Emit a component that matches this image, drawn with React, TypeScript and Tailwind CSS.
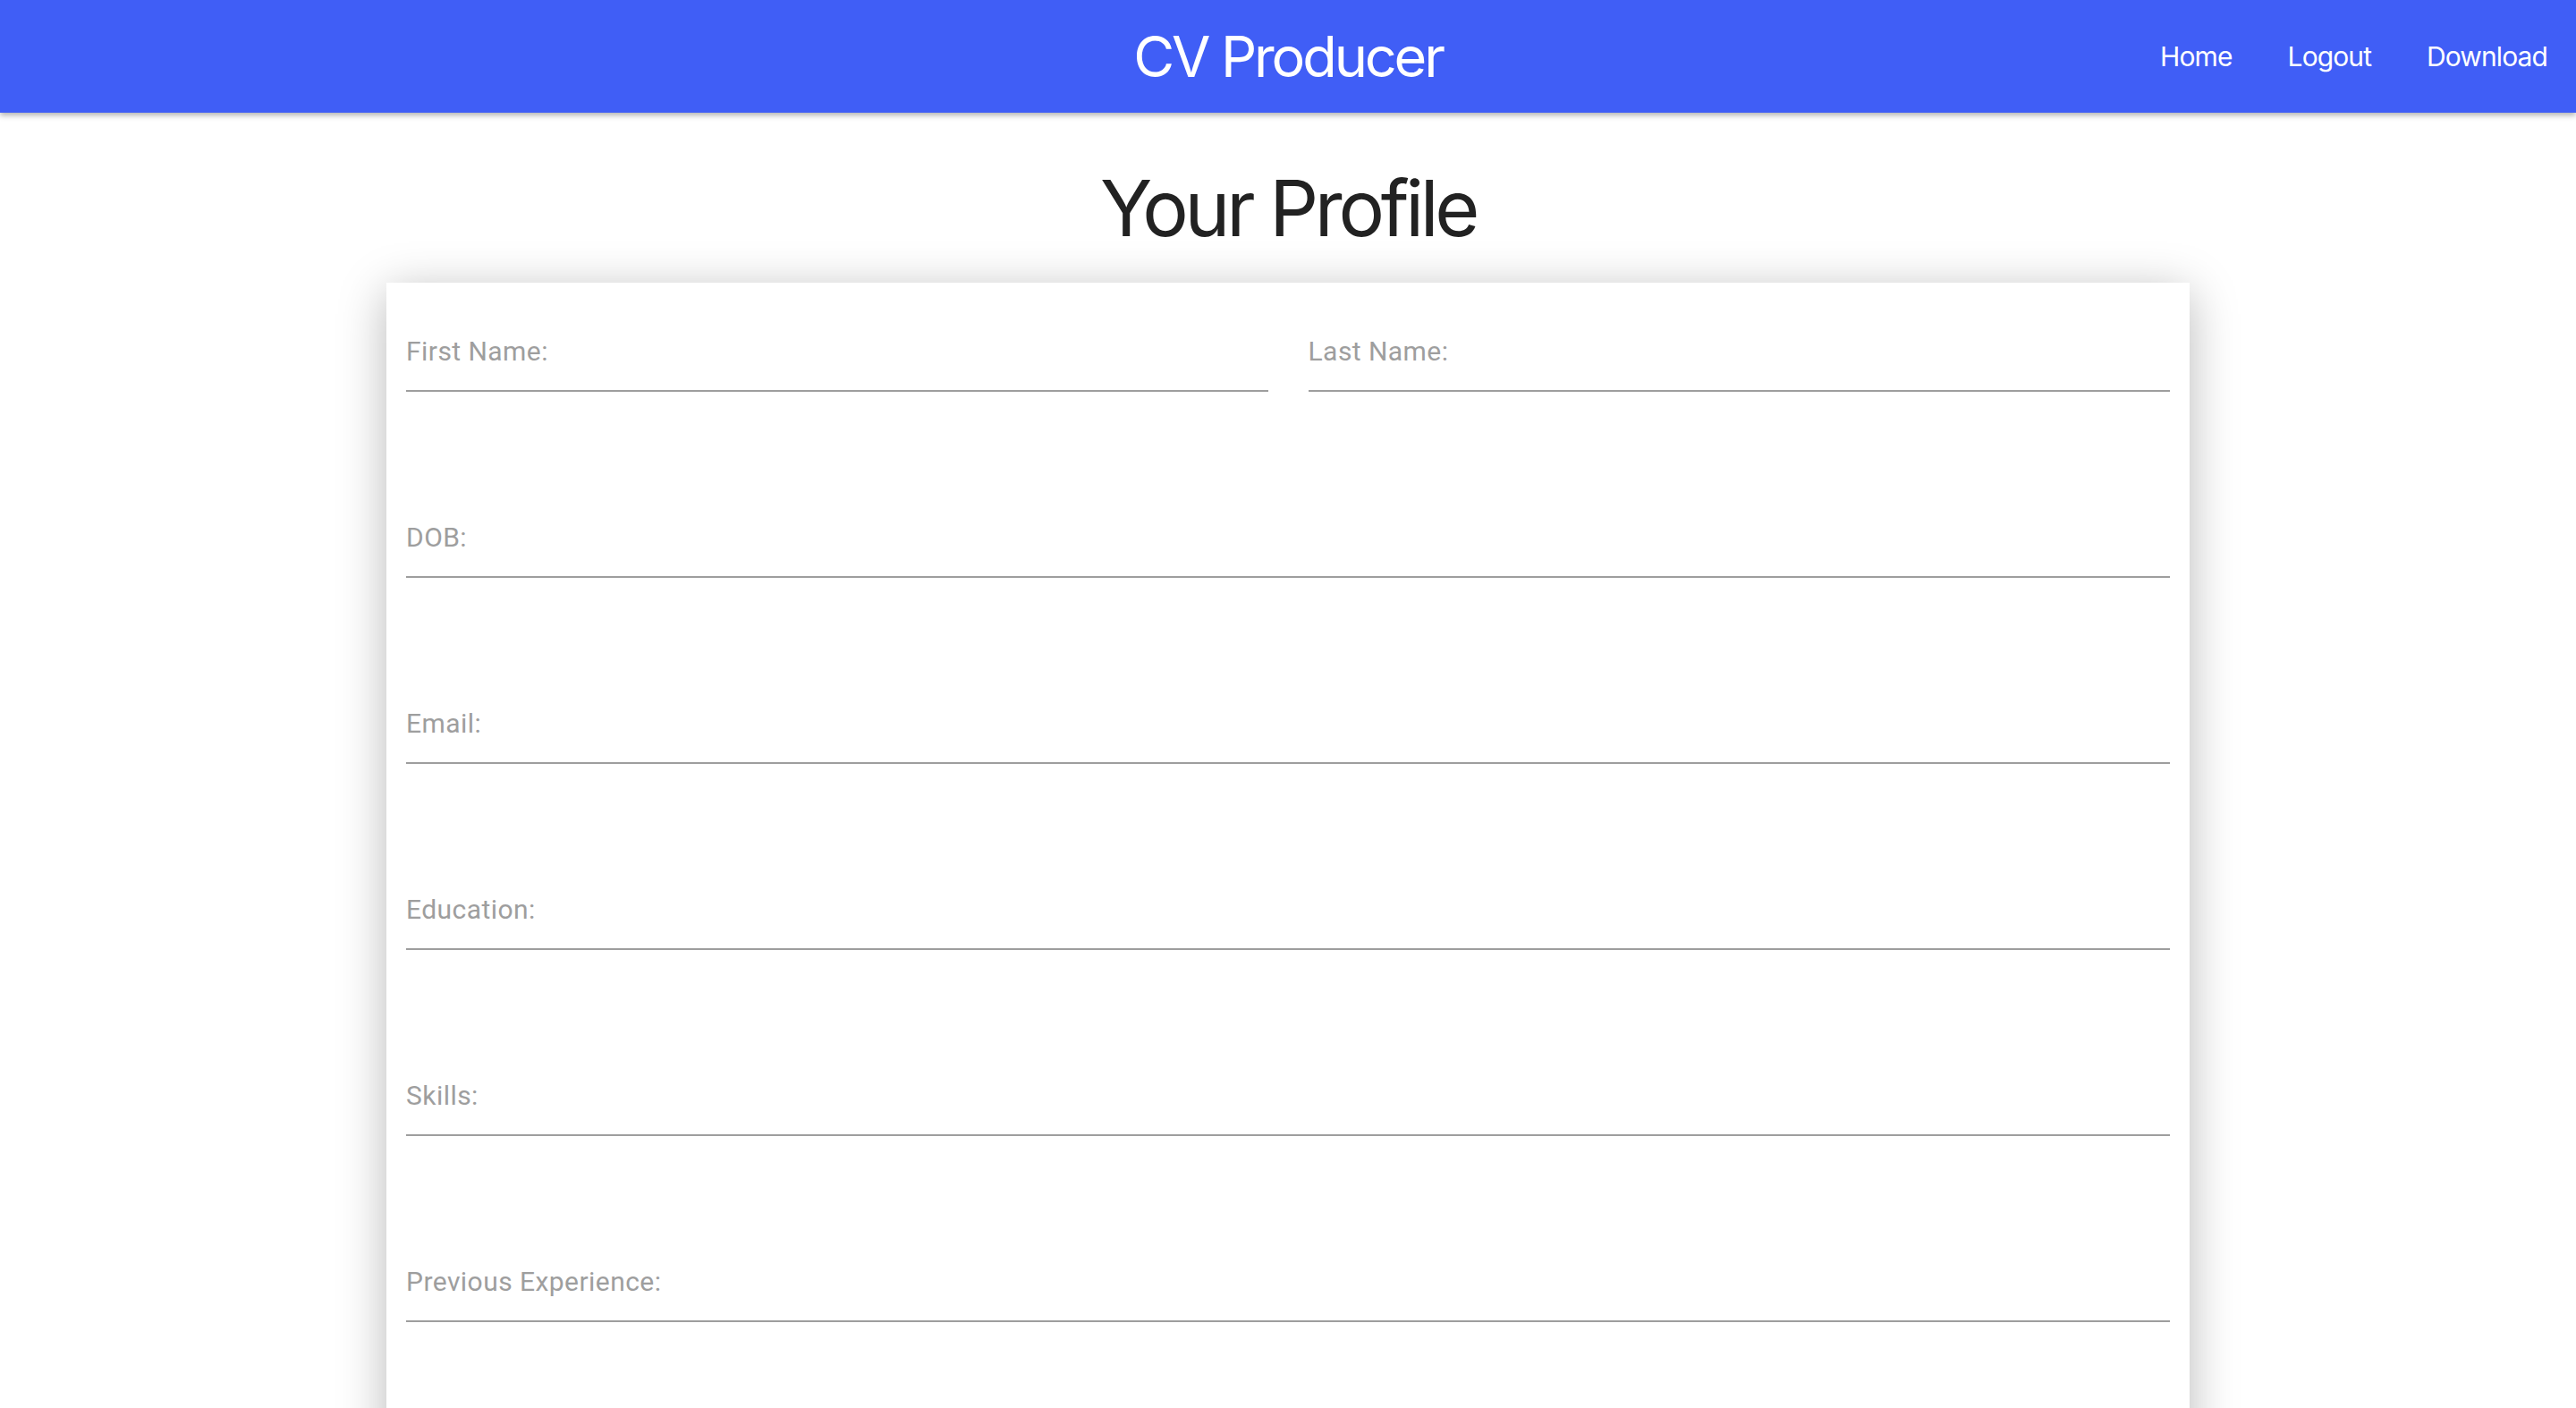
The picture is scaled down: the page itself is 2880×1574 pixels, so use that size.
import React from "react";

const fields = ["DOB:", "Email:", "Education:", "Skills:", "Previous Experience:"];

function Field({ label }: { label: string }) {
  return (
    <div className="border-b-2 border-[#9e9e9e] pb-[25px]">
      <span className="block text-[30px] leading-[36px] tracking-[0.015em] text-[#9e9e9e] font-['Roboto',sans-serif]">
        {label}
      </span>
    </div>
  );
}

export default function App() {
  return (
    <div className="min-h-screen w-full bg-white font-['Inter',sans-serif]">
      <header className="relative z-10 grid h-[126px] grid-cols-[1fr_auto_1fr] items-center bg-[#405ef6] shadow-[0_3px_6px_rgba(0,0,0,0.3)]">
        <div />
        <h1 className="text-[63px] leading-[76px] tracking-[-0.05em] text-white">CV Producer</h1>
        <nav className="flex justify-end gap-[62px] pr-[32px]">
          <a className="text-[30px] leading-[36px] tracking-[-0.03em] text-white">Home</a>
          <a className="text-[30px] leading-[36px] tracking-[-0.03em] text-white">Logout</a>
          <a className="text-[30px] leading-[36px] tracking-[-0.03em] text-white">Download</a>
        </nav>
      </header>

      <main className="flex flex-col items-center">
        <h2 className="mt-[55px] text-[86px] leading-[104px] tracking-[-0.05em] text-[#222222]">
          Your Profile
        </h2>

        <div className="mt-[31px] w-[2016px] bg-white px-[22px] pt-[59px] pb-[200px] shadow-[0_10px_50px_rgba(0,0,0,0.28)]">
          <div className="flex flex-col gap-[145px]">
            <div className="grid grid-cols-2 gap-[45px]">
              <Field label="First Name:" />
              <Field label="Last Name:" />
            </div>
            {fields.map((f) => (
              <Field key={f} label={f} />
            ))}
          </div>
        </div>
      </main>
    </div>
  );
}
